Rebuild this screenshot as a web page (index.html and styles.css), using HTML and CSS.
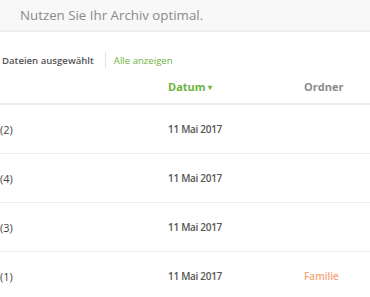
FILE: index.html
```html
<!DOCTYPE html>
<html lang="de">
<head>
<meta charset="utf-8">
<link rel="stylesheet" href="styles.css">
</head>
<body>
<div class="banner">Nutzen Sie Ihr Archiv optimal.</div>
<div class="toolbar">
  <span class="selected">Dateien ausgewählt</span>
  <span class="sep"></span>
  <a class="showall">Alle anzeigen</a>
</div>
<div class="table">
  <div class="row head">
    <div class="c-name"></div>
    <div class="c-date sorted">Datum <span class="caret">▾</span></div>
    <div class="c-folder">Ordner</div>
  </div>
  <div class="row">
    <div class="c-name">(2)</div>
    <div class="c-date">11 Mai 2017</div>
    <div class="c-folder"></div>
  </div>
  <div class="row">
    <div class="c-name">(4)</div>
    <div class="c-date">11 Mai 2017</div>
    <div class="c-folder"></div>
  </div>
  <div class="row">
    <div class="c-name">(3)</div>
    <div class="c-date">11 Mai 2017</div>
    <div class="c-folder"></div>
  </div>
  <div class="row">
    <div class="c-name">(1)</div>
    <div class="c-date">11 Mai 2017</div>
    <div class="c-folder tag">Familie</div>
  </div>
</div>
</body>
</html>
```
FILE: styles.css
```css
html, body {
  margin: 0;
  padding: 0;
  background: #fff;
  font-family: "Open Sans", "Liberation Sans", sans-serif;
  overflow: hidden;
}
.banner {
  height: 32px;
  box-sizing: border-box;
  padding-left: 20px;
  line-height: 30px;
  font-size: 13.3px;
  color: #8a8a8a;
  background: #f8f8f8;
  border-bottom: 2px solid #efefef;
}
.toolbar {
  display: flex;
  align-items: center;
  height: 34px;
  margin-top: 11px;
  padding-left: 2px;
  font-size: 9.6px;
}
.selected {
  color: #555;
  font-weight: 600;
}
.sep {
  width: 1px;
  height: 16px;
  background: #e2e2e2;
  margin: 0 8px 0 11px;
}
.showall {
  color: #6db33f;
}
.table {
  font-size: 10px;
}
.row {
  display: grid;
  grid-template-columns: 168px 136px 1fr;
  align-items: center;
  height: 48px;
  border-bottom: 1px solid #ececec;
  color: #555;
  font-weight: 600;
}
.row .c-date {
  font-size: 10px;
  font-weight: 600;
  letter-spacing: -0.3px;
}
.row .c-name {
  font-weight: 400;
  color: #444;
  font-size: 11px;
}
.row.head {
  height: 26px;
  align-items: start;
  border-bottom: 2px solid #ededed;
  color: #8a8a8a;
  font-weight: 700;
}
.row.head .c-date, .row.head .c-folder {
  padding-top: 2px;
  font-size: 11px;
  font-weight: 700;
  letter-spacing: 0;
}
.sorted {
  color: #6db33f;
}
.caret {
  font-size: 8px;
  vertical-align: 1px;
}
.tag {
  color: #f6a47a;
  font-weight: 600;
}
```
